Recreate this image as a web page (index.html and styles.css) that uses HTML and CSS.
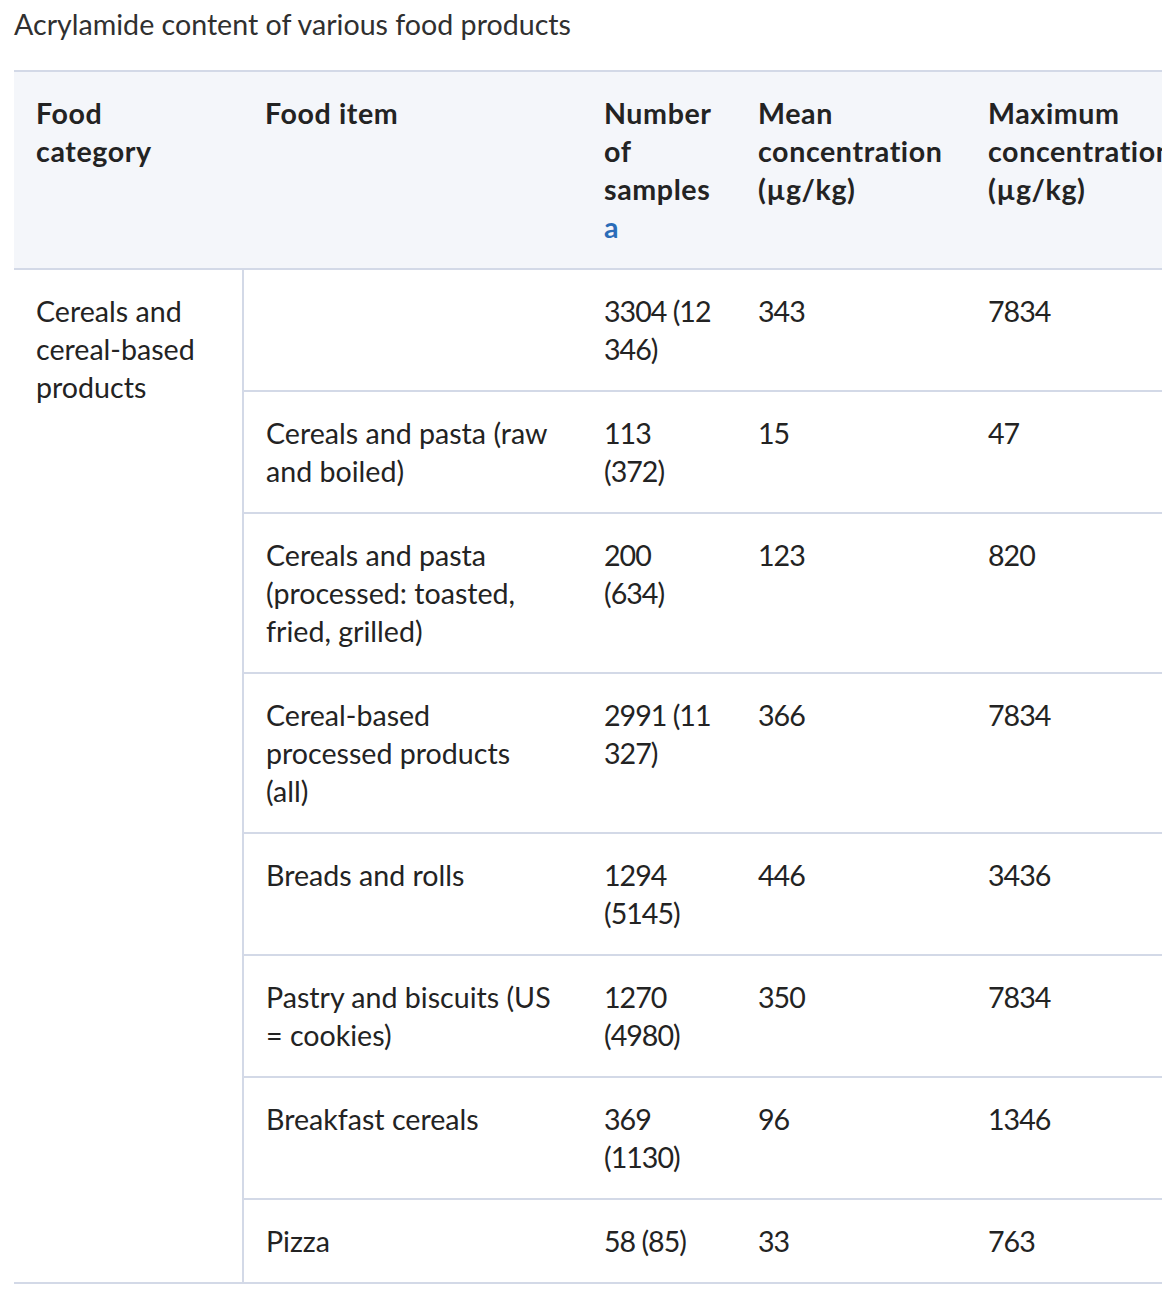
FILE: index.html
```html
<!DOCTYPE html>
<html lang="en">
<head>
<meta charset="utf-8">
<title>Acrylamide content of various food products</title>
<link rel="stylesheet" href="styles.css">
</head>
<body>
<div class="page">
  <p class="title">Acrylamide content of various food products</p>
  <div class="scroller">
    <table class="data">
      <colgroup>
        <col class="c1"><col class="c2"><col class="c3"><col class="c4"><col class="c5">
      </colgroup>
      <thead>
        <tr>
          <th>Food category</th>
          <th>Food item</th>
          <th>Number of samples <a class="ref" href="#fn-a">a</a></th>
          <th>Mean concentration (µg/kg)</th>
          <th>Maximum concentration (µg/kg)</th>
        </tr>
      </thead>
      <tbody>
        <tr>
          <td class="cat" rowspan="8">Cereals and cereal-based products</td>
          <td class="item"></td>
          <td class="num">3304 (12 346)</td>
          <td class="num">343</td>
          <td class="num">7834</td>
        </tr>
        <tr>
          <td class="item">Cereals and pasta (raw and boiled)</td>
          <td class="num">113 (372)</td>
          <td class="num">15</td>
          <td class="num">47</td>
        </tr>
        <tr>
          <td class="item">Cereals and pasta (processed: toasted, fried, grilled)</td>
          <td class="num">200 (634)</td>
          <td class="num">123</td>
          <td class="num">820</td>
        </tr>
        <tr>
          <td class="item">Cereal-based processed products (all)</td>
          <td class="num">2991 (11 327)</td>
          <td class="num">366</td>
          <td class="num">7834</td>
        </tr>
        <tr>
          <td class="item">Breads and rolls</td>
          <td class="num">1294 (5145)</td>
          <td class="num">446</td>
          <td class="num">3436</td>
        </tr>
        <tr>
          <td class="item">Pastry and biscuits (US = cookies)</td>
          <td class="num">1270 (4980)</td>
          <td class="num">350</td>
          <td class="num">7834</td>
        </tr>
        <tr>
          <td class="item">Breakfast cereals</td>
          <td class="num">369 (1130)</td>
          <td class="num">96</td>
          <td class="num">1346</td>
        </tr>
        <tr>
          <td class="item">Pizza</td>
          <td class="num">58 (85)</td>
          <td class="num">33</td>
          <td class="num">763</td>
        </tr>
      </tbody>
    </table>
  </div>
</div>
</body>
</html>
```

FILE: styles.css
```css
html, body {
  margin: 0;
  padding: 0;
  background: #ffffff;
}

body {
  font-family: "Source Sans Pro", Lato, "Noto Sans", sans-serif;
  font-size: 28.6px;
  line-height: 38px;
  color: #232323;
}

.page {
  padding: 5px 12px 0 14px;
}

.title {
  margin: 0 0 27px 0;
  color: #303030;
}

.scroller {
  width: 1148px;
  overflow: hidden;
}

.data {
  border-collapse: collapse;
  table-layout: fixed;
  width: 1260px;
}

.c1 { width: 229px; }
.c2 { width: 339px; }
.c3 { width: 154px; }
.c4 { width: 230px; }
.c5 { width: 308px; }

.data th,
.data td {
  padding: 22px;
  text-align: left;
  vertical-align: top;
}

.data thead th {
  background: #f4f6fa;
  font-weight: 700;
  letter-spacing: 0.6px;
  border-top: 2px solid #d3d9e7;
  border-bottom: 2px solid #d3d9e7;
}

.data tbody td {
  border-bottom: 2px solid #d3d9e7;
}

.data tbody td.cat {
  border-right: 2px solid #d3d9e7;
}

.data td.item {
  padding-right: 27px;
}

.data td.num {
  letter-spacing: -1px;
}

.ref {
  color: #2a6cb8;
  text-decoration: none;
}
```
